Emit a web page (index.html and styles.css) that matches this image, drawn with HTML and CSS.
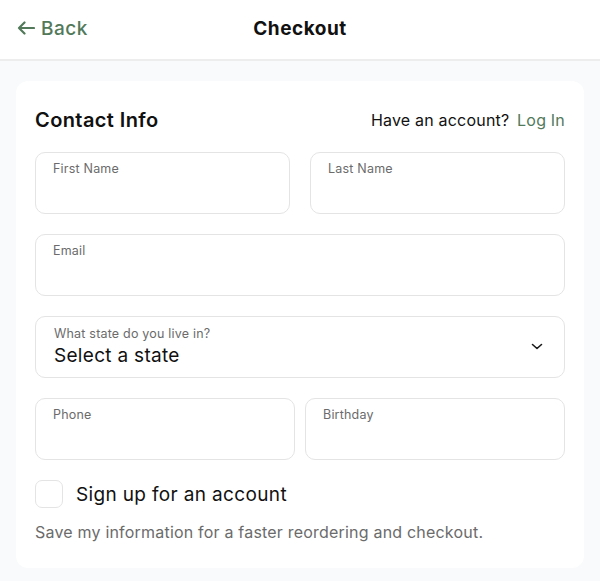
FILE: index.html
```html
<!DOCTYPE html>
<html>
<head>
<meta charset="utf-8">
<link rel="stylesheet" href="styles.css">
</head>
<body>
<header class="topbar">
  <a class="back">
    <svg class="back-icon" viewBox="0 0 18 14" width="18" height="14"><path d="M17 7H2M7.5 1.5L2 7l5.5 5.5" fill="none" stroke="currentColor" stroke-width="2.2" stroke-linecap="round" stroke-linejoin="round"/></svg>
    <span>Back</span>
  </a>
  <h1 class="title">Checkout</h1>
  <span class="spacer"></span>
</header>
<main class="page">
  <section class="card">
    <div class="card-head">
      <h2 class="card-title">Contact Info</h2>
      <p class="account">Have an account? <a class="login">Log In</a></p>
    </div>
    <div class="row two">
      <label class="field"><span class="label">First Name</span></label>
      <label class="field"><span class="label">Last Name</span></label>
    </div>
    <div class="row">
      <label class="field"><span class="label">Email</span></label>
    </div>
    <div class="row">
      <div class="field select">
        <div class="select-text">
          <span class="label">What state do you live in?</span>
          <span class="value">Select a state</span>
        </div>
        <svg class="chevron" viewBox="0 0 12 7" width="12" height="7"><path d="M1.5 1.5L6 5.5l4.5-4" fill="none" stroke="#1a1a1a" stroke-width="1.6" stroke-linecap="round" stroke-linejoin="round"/></svg>
      </div>
    </div>
    <div class="row two narrow">
      <label class="field"><span class="label">Phone</span></label>
      <label class="field"><span class="label">Birthday</span></label>
    </div>
    <div class="check-row">
      <span class="checkbox"></span>
      <span class="check-label">Sign up for an account</span>
    </div>
    <p class="note">Save my information for a faster reordering and checkout.</p>
  </section>
</main>
</body>
</html>
```
FILE: styles.css
```css
* { box-sizing: border-box; }
html, body { margin: 0; padding: 0; }
body {
  font-family: Inter, "Noto Sans", sans-serif;
  background: #f8fafb;
  color: #111;
  width: 600px;
  height: 581px;
  overflow: hidden;
  letter-spacing: 0.2px;
}
.topbar {
  height: 61px;
  background: #fff;
  border-bottom: 2px solid #ededed;
  display: flex;
  align-items: center;
  padding: 0 17px 3px;
}
.back {
  flex: 1;
  display: flex;
  align-items: center;
  gap: 6px;
  color: #52795a;
  font-size: 19px;
  font-weight: 500;
  letter-spacing: 0.5px;
}
.back-icon { display: block; }
.title {
  margin: 0;
  font-size: 19px;
  font-weight: 700;
  color: #111;
  letter-spacing: 0.5px;
}
.spacer { flex: 1; }
.page {
  padding: 20px 16px 0;
}
.card {
  background: #fff;
  border-radius: 12px;
  padding: 25px 19px 25px;
}
.card-head {
  display: flex;
  justify-content: space-between;
  align-items: center;
  height: 28px;
  margin-bottom: 18px;
}
.card-title {
  margin: 0;
  font-size: 20px;
  font-weight: 600;
  color: #111;
  letter-spacing: 0.4px;
}
.account {
  margin: 0;
  font-size: 16px;
  color: #111;
}
.login { color: #52795a; margin-left: 3px; }
.row {
  display: flex;
  gap: 20px;
  margin-bottom: 20px;
}
.row.narrow { gap: 10px; }
.field {
  flex: 1;
  height: 62px;
  border: 1px solid #e4e4e4;
  border-radius: 10px;
  padding: 7px 17px;
  display: block;
}
.label {
  display: block;
  font-size: 12.5px;
  color: #6b6b6b;
  line-height: 18px;
}
.select {
  display: flex;
  align-items: center;
  justify-content: space-between;
  padding: 6px 21px 6px 18px;
}
.select-text { display: flex; flex-direction: column; }
.value {
  font-size: 19px;
  color: #111;
  line-height: 26px;
  letter-spacing: 0.3px;
}
.chevron { display: block; margin-top: -2px; }
.check-row {
  display: flex;
  align-items: center;
  gap: 13px;
  height: 28px;
  margin-bottom: 13px;
}
.checkbox {
  width: 28px;
  height: 28px;
  border: 1px solid #e4e4e4;
  border-radius: 7px;
}
.check-label {
  font-size: 19px;
  color: #111;
  letter-spacing: 0.35px;
}
.note {
  margin: 0;
  font-size: 16px;
  line-height: 22px;
  color: #6b6b6b;
}
```
